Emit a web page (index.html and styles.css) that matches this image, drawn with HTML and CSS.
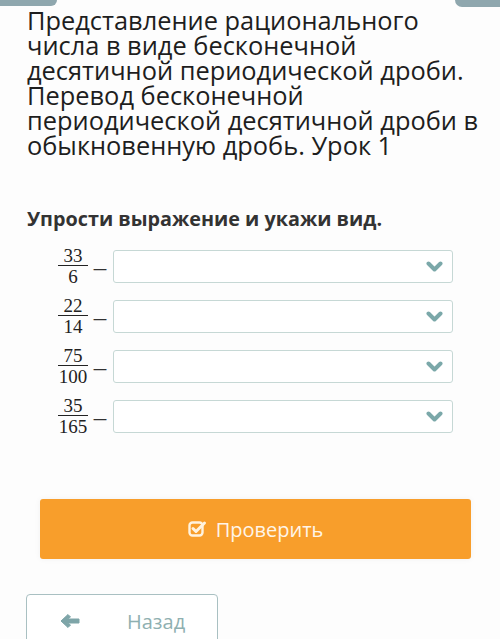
FILE: index.html
```html
<!DOCTYPE html>
<html>
  <head>
    <title>Урок 1</title>
    <link rel="stylesheet" href="styles.css">
  </head>
  <body>
    <div class="topbar">
      <div class="tab tab-left"></div>
      <div class="tab tab-right"></div>
    </div>
    <div class="lesson">
      <h1 class="lesson-title">Представление рационального числа в виде бесконечной десятичной периодической дроби. Перевод бесконечной периодической десятичной дроби в обыкновенную дробь. Урок 1</h1>

      <div class="task-text">Упрости выражение и укажи вид.</div>

      <div class="task-rows">
        <div class="task-row">
          <div class="frac"><span class="num">33</span><span class="den">6</span></div>
          <span class="dash">—</span>
          <div class="select">
            <svg class="chevron" width="17" height="11" viewBox="0 0 17 11"><polyline points="2.5,2.5 8.5,8.5 14.5,2.5" fill="none" stroke="#7ba8a9" stroke-width="4" stroke-linecap="round" stroke-linejoin="round"/></svg>
          </div>
        </div>
        <div class="task-row">
          <div class="frac"><span class="num">22</span><span class="den">14</span></div>
          <span class="dash">—</span>
          <div class="select">
            <svg class="chevron" width="17" height="11" viewBox="0 0 17 11"><polyline points="2.5,2.5 8.5,8.5 14.5,2.5" fill="none" stroke="#7ba8a9" stroke-width="4" stroke-linecap="round" stroke-linejoin="round"/></svg>
          </div>
        </div>
        <div class="task-row">
          <div class="frac"><span class="num">75</span><span class="den">100</span></div>
          <span class="dash">—</span>
          <div class="select">
            <svg class="chevron" width="17" height="11" viewBox="0 0 17 11"><polyline points="2.5,2.5 8.5,8.5 14.5,2.5" fill="none" stroke="#7ba8a9" stroke-width="4" stroke-linecap="round" stroke-linejoin="round"/></svg>
          </div>
        </div>
        <div class="task-row">
          <div class="frac"><span class="num">35</span><span class="den">165</span></div>
          <span class="dash">—</span>
          <div class="select">
            <svg class="chevron" width="17" height="11" viewBox="0 0 17 11"><polyline points="2.5,2.5 8.5,8.5 14.5,2.5" fill="none" stroke="#7ba8a9" stroke-width="4" stroke-linecap="round" stroke-linejoin="round"/></svg>
          </div>
        </div>
      </div>
    </div>

    <div class="check-wrap">
      <div class="btn-check">
        <svg class="check-icon" width="19" height="18" viewBox="0 0 19 18">
          <rect x="1.5" y="2.5" width="13" height="13" rx="3" fill="none" stroke="#fff3df" stroke-width="2.4"/>
          <polyline points="5,8.5 8,11.5 16.5,3" fill="none" stroke="#fff3df" stroke-width="3" stroke-linecap="round" stroke-linejoin="round"/>
        </svg>
        <span>Проверить</span>
      </div>
    </div>

    <div class="nav">
      <div class="btn-back">
        <svg class="back-icon" width="20" height="16" viewBox="0 0 20 16"><path d="M1 8 L8 1.5 L10.5 4 L7.5 6 H19 V10 H7.5 L10.5 12 L8 14.5 Z" fill="#7ea5a8" stroke="#7ea5a8" stroke-width="1" stroke-linejoin="round"/></svg>
        <span>Назад</span>
      </div>
    </div>
  </body>
</html>
```

FILE: styles.css
```css
body {
  margin: 0;
  background-color: #fdfdfd;
  font-family: "Open Sans", "Noto Sans", sans-serif;
  color: #222;
}
.topbar {
  display: flex;
  justify-content: space-between;
  height: 7px;
}
.tab {
  background-color: #8fa7ae;
}
.tab-left {
  width: 57px;
  height: 6px;
  border-bottom-right-radius: 8px;
}
.tab-right {
  width: 45px;
  height: 7px;
  border-bottom-left-radius: 8px;
}
.lesson {
  padding: 0 18px 0 27px;
}
.lesson-title {
  margin: 1px 0 0 0;
  font-size: 25.4px;
  font-weight: normal;
  line-height: 25px;
  color: #1e1e1e;
}
.task-text {
  margin-top: 48px;
  font-size: 19.8px;
  font-weight: bold;
  line-height: 25px;
  color: #333;
}
.task-rows {
  margin-top: 16px;
  display: flex;
  flex-direction: column;
  gap: 12px;
}
.task-row {
  display: flex;
  align-items: center;
  height: 38px;
  padding-left: 31px;
}
.frac {
  display: flex;
  flex-direction: column;
  align-items: center;
  min-width: 30px;
  font-family: "Liberation Serif", "DejaVu Serif", serif;
  font-size: 19px;
  line-height: 17px;
  color: #222;
}
.frac .num {
  padding: 0 2px 1px;
  border-bottom: 1px solid #222;
  align-self: stretch;
  text-align: center;
}
.frac .den {
  padding-top: 2px;
}
.dash {
  margin: 5px 6px 0 5px;
  font-size: 14px;
  color: #333;
}
.select {
  flex: 1;
  height: 33px;
  margin-right: 29px;
  box-sizing: border-box;
  border: 1.5px solid #c6d8d5;
  border-radius: 3px;
  background-color: #fff;
  display: flex;
  align-items: center;
  justify-content: flex-end;
  padding-right: 9px;
}
.check-wrap {
  padding: 64px 29px 0 40px;
}
.btn-check {
  height: 60px;
  border-radius: 3px;
  background-color: #f89e2b;
  box-shadow: 0 0 6px rgba(0, 0, 0, 0.05);
  display: flex;
  align-items: center;
  justify-content: center;
  gap: 9px;
  font-size: 20px;
  color: #fff5e8;
}
.check-icon {
  margin-top: -1px;
}
.nav {
  padding: 35px 0 0 26px;
}
.btn-back {
  width: 192px;
  height: 60px;
  box-sizing: border-box;
  border: 1.5px solid #a9c0c2;
  border-radius: 4px;
  background-color: #fff;
  display: flex;
  align-items: center;
  padding: 0 0 6px 33px;
  gap: 47px;
  font-size: 20px;
  color: #8fb0b1;
}
```
